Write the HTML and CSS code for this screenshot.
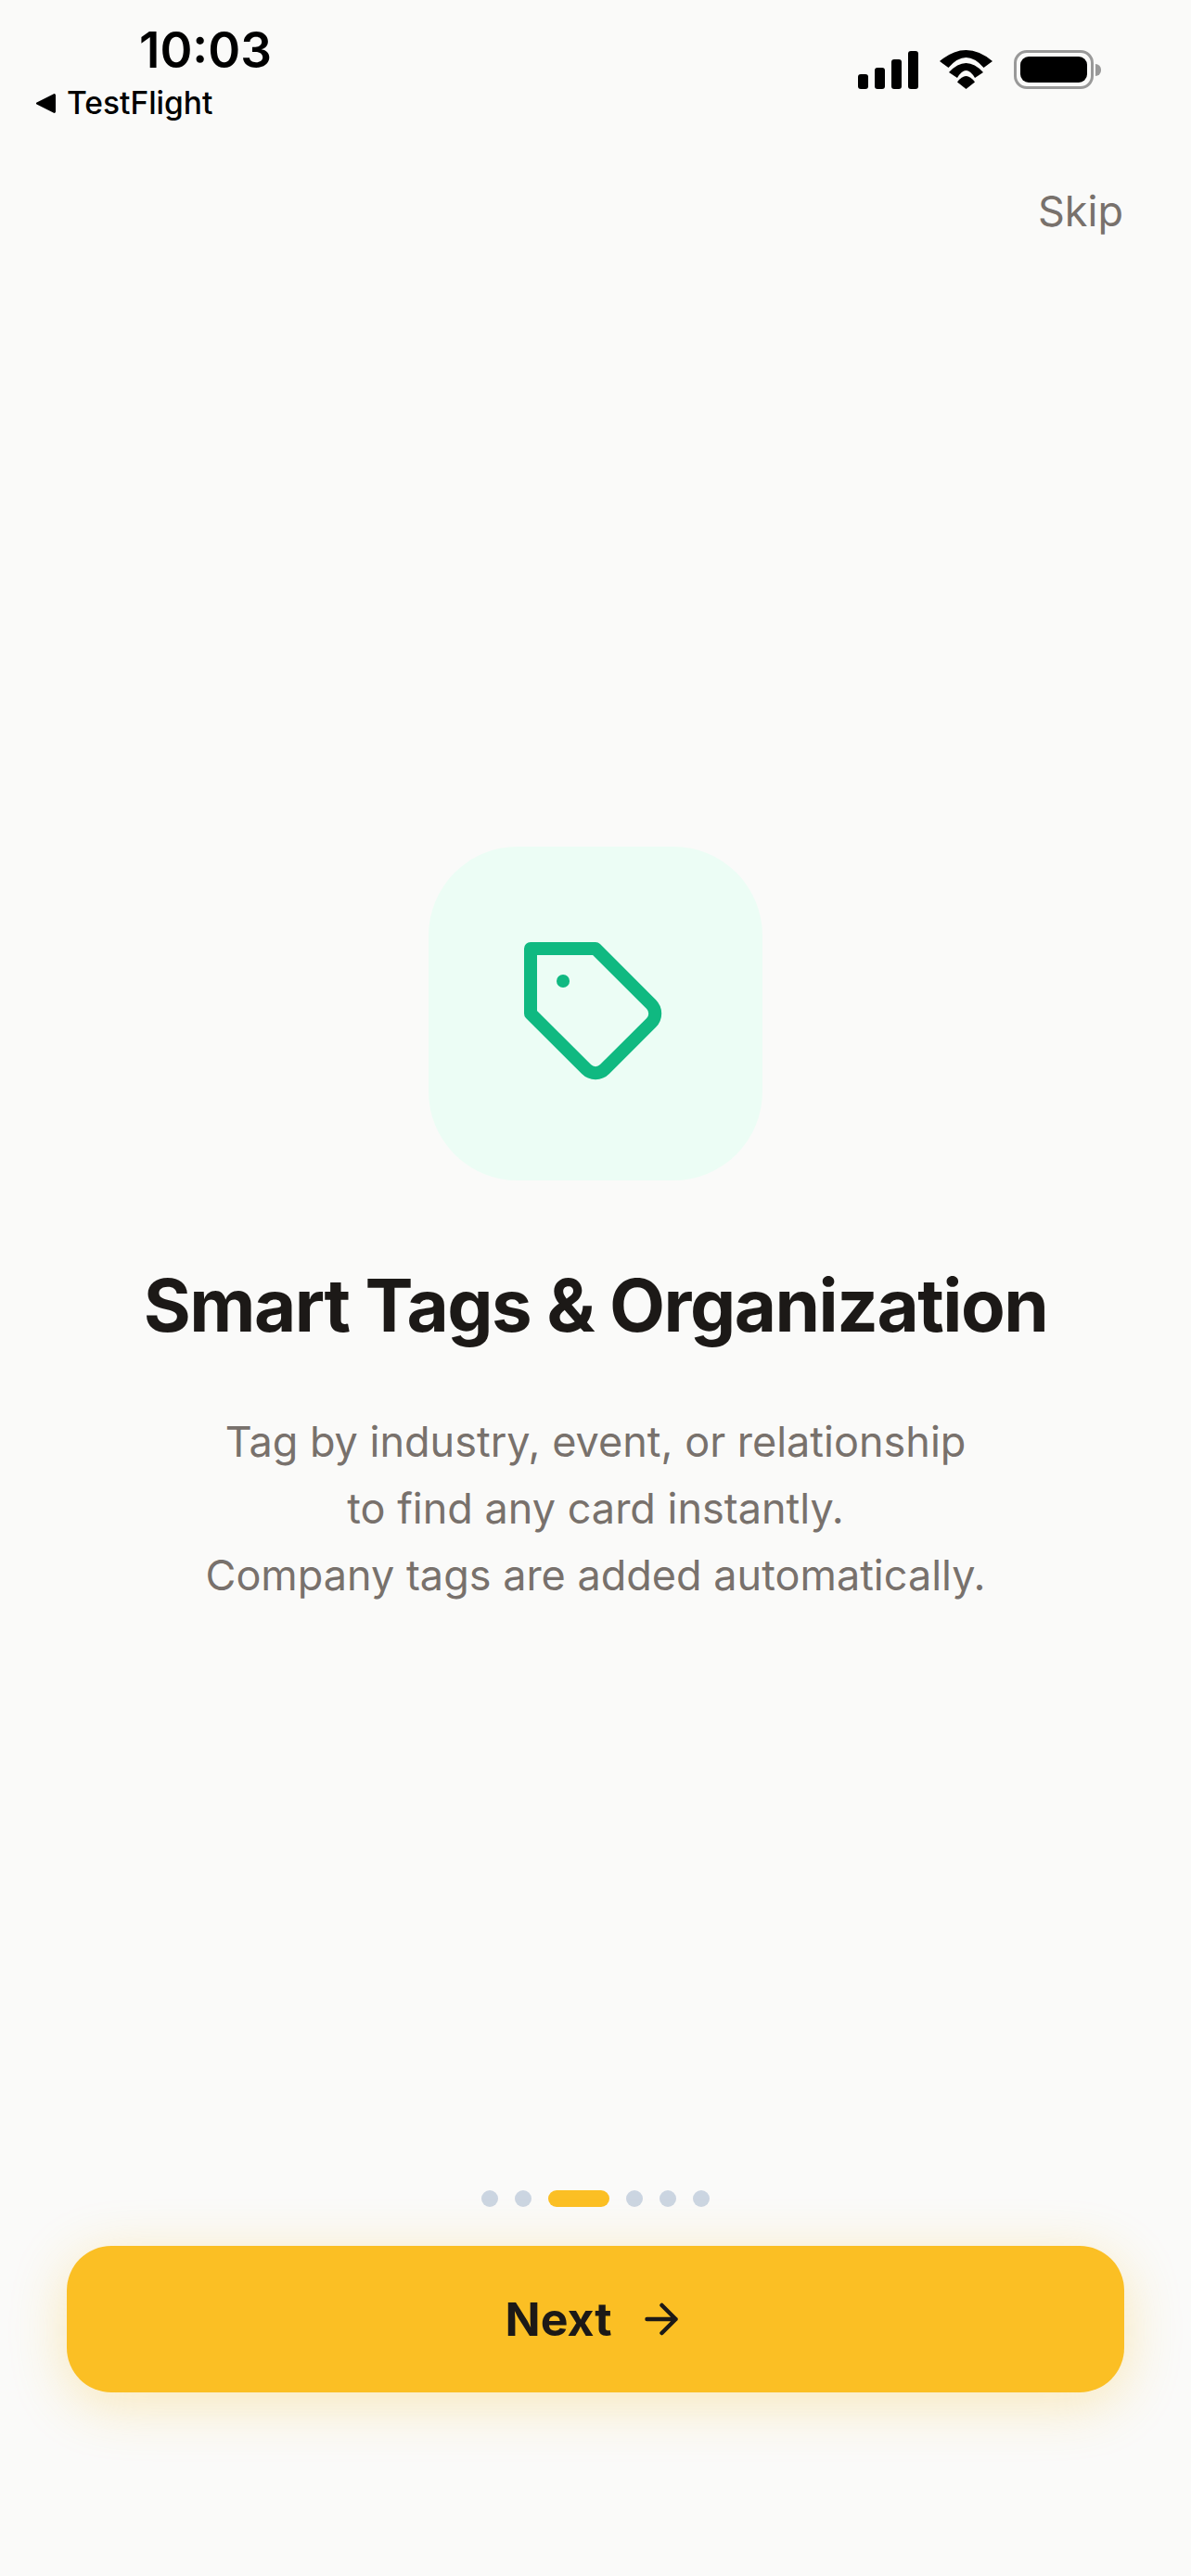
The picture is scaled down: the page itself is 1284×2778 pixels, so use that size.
FILE: index.html
```html
<!DOCTYPE html>
<html lang="en">
<head>
<meta charset="utf-8">
<title>Smart Tags &amp; Organization</title>
<link rel="stylesheet" href="styles.css">
</head>
<body>
<div class="page">
  <header class="status">
    <div class="status-left">
      <div class="time">10:03</div>
      <div class="back">
        <svg class="back-arrow" viewBox="0 0 21 21"><path d="M18.500 .5a1.500 1.500 0 0 1 2.500 1v18a1.500 1.500 0 0 1-2.500 1L.6 11.500a1.200 1.200 0 0 1 0-2z"/></svg>
        <span>TestFlight</span>
      </div>
    </div>
    <div class="status-right">
      <div class="signal">
        <span class="bar bar-1"></span>
        <span class="bar bar-2"></span>
        <span class="bar bar-3"></span>
        <span class="bar bar-4"></span>
      </div>
      <svg class="wifi" viewBox="0 0 57 42">
        <path d="M0 12Q28.5-12 57 12L47.5 19Q28.5-3 9.500 19Z"/>
        <path d="M10 24Q28.500 4 47 24L38 30Q28.500 14 19 30Z"/>
        <path d="M19 34.500Q28.500 21.500 38 34.500L28.500 42Z"/>
      </svg>
      <div class="battery">
        <div class="battery-body"><div class="battery-fill"></div></div>
        <div class="battery-nub"></div>
      </div>
    </div>
  </header>
  <div class="skip-row"><span class="skip">Skip</span></div>
  <main class="content">
    <div class="icon-box">
      <svg class="tag" viewBox="0 0 24 24" fill="none" stroke="#10b981" stroke-width="2" stroke-linecap="round" stroke-linejoin="round">
        <path d="M20.590 13.410l-7.170 7.170a2 2 0 0 1-2.830 0L2 12V2h10l8.590 8.590a2 2 0 0 1 0 2.820z"/>
        <line x1="7" y1="7" x2="7.010" y2="7"/>
      </svg>
    </div>
    <h1 class="title">Smart Tags &amp; Organization</h1>
    <p class="desc">Tag by industry, event, or relationship<br>to find any card instantly.<br>Company tags are added automatically.</p>
  </main>
  <footer class="footer">
    <div class="dots">
      <span class="dot"></span>
      <span class="dot"></span>
      <span class="dot dot-active"></span>
      <span class="dot"></span>
      <span class="dot"></span>
      <span class="dot"></span>
    </div>
    <button class="next">
      <span>Next</span>
      <svg class="arrow" viewBox="0 0 36 36" fill="none" stroke="#1c1917" stroke-width="4.500" stroke-linecap="round" stroke-linejoin="round"><path d="M2.500 18H33.500M18.500 3L33.500 18L18.500 33"/></svg>
    </button>
  </footer>
</div>
</body>
</html>
```
FILE: styles.css
```css
* { box-sizing: border-box; }
html, body { margin: 0; padding: 0; }
body { background: #fafaf9; font-family: Inter, "Liberation Sans", sans-serif; color: #1c1917; }
.page { width: 1284px; height: 2778px; display: flex; flex-direction: column; overflow: hidden; }

.status { height: 150px; display: flex; justify-content: space-between; flex-shrink: 0; }
.status-left { padding: 24px 0 0 39px; }
.time { margin-left: 111px; font-size: 53px; line-height: 60px; font-weight: 600; color: #000; }
.back { display: flex; align-items: center; gap: 12px; margin-top: 6px; font-size: 33.500px; line-height: 42px; font-weight: 500; color: #000; }
.back-arrow { width: 21px; height: 21px; fill: #000; }
.status-right { display: flex; align-items: flex-start; padding: 54px 97px 0 0; }
.signal { display: flex; align-items: flex-end; gap: 7px; height: 42px; margin-right: 23px; }
.bar { width: 11px; background: #000; border-radius: 3px; }
.bar-1 { height: 16px; }
.bar-2 { height: 23px; }
.bar-3 { height: 32px; }
.bar-4 { height: 41px; }
.wifi { width: 57px; height: 42px; fill: #000; margin-right: 23px; }
.battery { display: flex; align-items: center; height: 42px; }
.battery-body { width: 86px; height: 42px; border: 3px solid #999; border-radius: 14px; padding: 4px; }
.battery-fill { width: 100%; height: 100%; background: #000; border-radius: 9px; }
.battery-nub { width: 6px; height: 13px; margin-left: 2px; background: #999; border-radius: 0 7px 7px 0; }

.skip-row { display: flex; justify-content: flex-end; padding: 48px 73px 0 0; flex-shrink: 0; }
.skip { font-size: 45px; line-height: 60px; color: #78716c; }

.content { display: flex; flex-direction: column; align-items: center; padding-top: 655px; flex-shrink: 0; }
.icon-box { width: 360px; height: 360px; border-radius: 96px; background: #ecfdf5; display: flex; align-items: center; justify-content: center; }
.tag { width: 168px; height: 168px; display: block; }
.title { margin: 87px 0 0; font-size: 78px; line-height: 96px; font-weight: 700; letter-spacing: -1.500px; text-align: center; white-space: nowrap; }
.desc { margin: 63px 0 0; font-size: 45px; line-height: 72px; color: #78716c; text-align: center; }

.footer { margin-top: auto; padding: 0 72px 198px; display: flex; flex-direction: column; align-items: center; }
.dots { display: flex; gap: 18px; margin-bottom: 42px; }
.dot { width: 18px; height: 18px; border-radius: 9px; background: #cbd5e1; }
.dot-active { width: 66px; background: #fbbf24; }
.next { width: 100%; height: 158px; border: 0; border-radius: 48px; background: #fbbf24; box-shadow: 0 12px 60px rgba(251, 191, 36, 0.3); display: flex; align-items: center; justify-content: center; gap: 36px; font-family: inherit; font-size: 50px; font-weight: 700; color: #1c1917; padding: 0 8px 0 0; }
.arrow { width: 36px; height: 36px; display: block; }
```
